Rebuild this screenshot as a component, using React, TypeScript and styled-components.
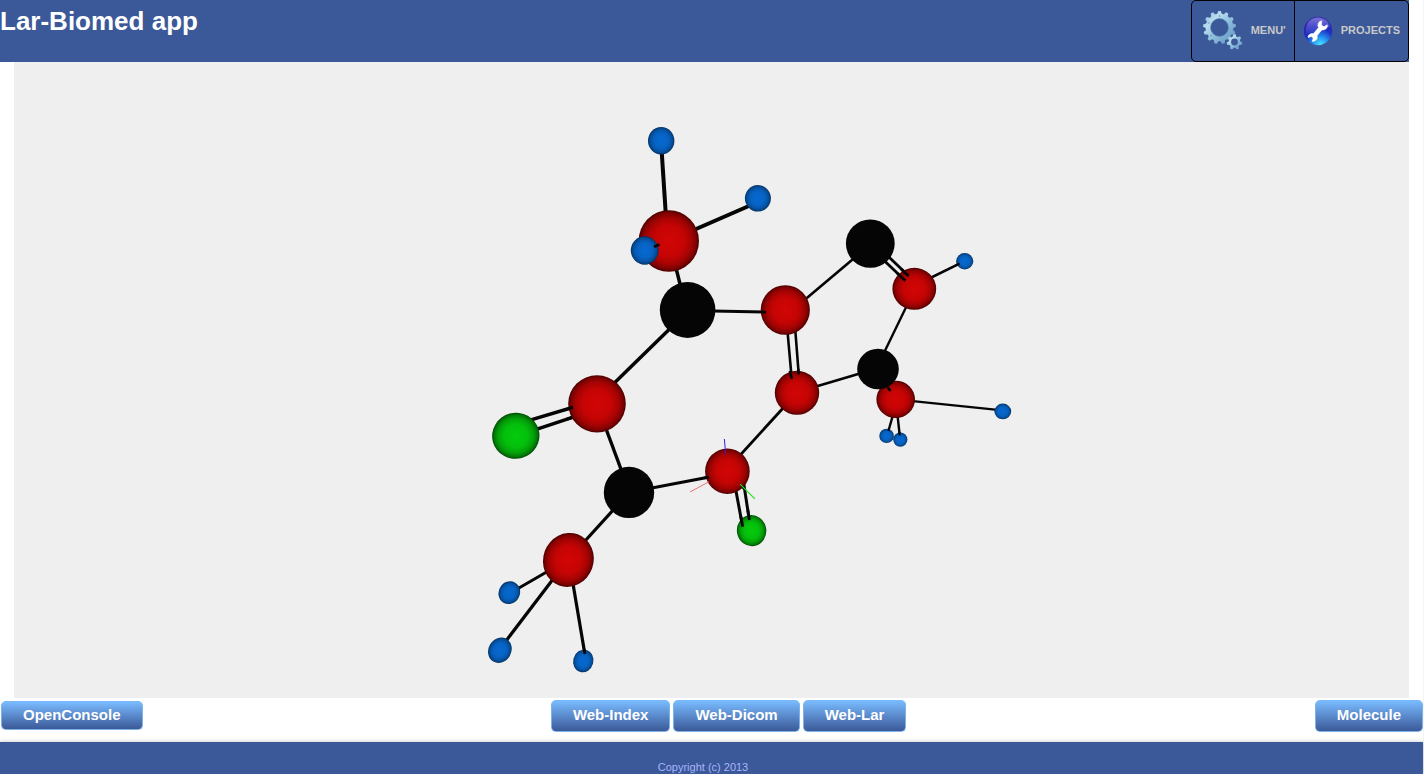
import React from "react";
import styled, { createGlobalStyle } from "styled-components";

const GlobalStyle = createGlobalStyle`
  * { box-sizing: border-box; }
  body {
    margin: 0;
    background: #fff;
    font-family: "Liberation Sans", Arial, sans-serif;
  }
`;

const Page = styled.div`
  display: flex;
  flex-direction: column;
  min-height: 100vh;
  border-right: 1px solid #f4f4f4;
`;

const Header = styled.header`
  display: flex;
  justify-content: space-between;
  height: 62px;
  margin-right: 14px;
  background: #3b5998;
`;

const Title = styled.h1`
  margin: 0;
  padding-top: 5px;
  font-size: 26px;
  line-height: 32px;
  font-weight: bold;
  color: #fff;
`;

const Menu = styled.nav`
  display: flex;
  border: 1px solid #000;
  border-radius: 5px;
`;

const MenuLink = styled.a`
  display: flex;
  align-items: center;
  gap: 8px;
  padding: 0 8px 2px;
  font-size: 11px;
  font-weight: bold;
  color: #c8c8c8;
  text-decoration: none;

  & + & {
    border-left: 1px solid #000;
  }
`;

const Stage = styled.main`
  display: flex;
  flex: 1;
  margin: 0 14px;
  background: #efefef;
`;

const Scene = styled.svg`
  display: block;
  flex: 1;
  min-width: 0;
  height: auto;
`;

const Toolbar = styled.div`
  display: flex;
  justify-content: space-between;
  align-items: flex-start;
  height: 44px;
  padding: 2px 0 0 1px;
`;

const ButtonGroup = styled.div`
  display: flex;
  gap: 3px;
`;

const Button = styled.button<{ $compact?: boolean }>`
  height: ${(p) => (p.$compact ? 29 : 32)}px;
  margin-top: ${(p) => (p.$compact ? 1 : 0)}px;
  padding: 0 21px 2px;
  border: 1px solid #7eb3e8;
  border-top-color: #7ab8fa;
  border-radius: 5px;
  background: linear-gradient(#79bbff, #3b5998);
  color: #fff;
  font-family: inherit;
  font-size: 15px;
  line-height: 18px;
  font-weight: bold;
  cursor: pointer;
`;

const Footer = styled.footer`
  height: 32px;
  padding: 18px 17px 0 0;
  background: #3b5998;
  box-shadow: 0 0 4px rgba(0, 0, 0, 0.25);
  color: #a8b4ff;
  font-size: 11px;
  line-height: 14px;
  text-align: center;
`;

function gearPath(cx: number, cy: number, outer: number, root: number, hole: number, teeth: number) {
  const step = (Math.PI * 2) / teeth;
  const at = (r: number, a: number) =>
    `${(cx + r * Math.cos(a)).toFixed(2)} ${(cy + r * Math.sin(a)).toFixed(2)}`;
  const points: string[] = [];
  for (let i = 0; i < teeth; i++) {
    const a = i * step - Math.PI / 2;
    points.push(at(root, a - step * 0.34), at(outer, a - step * 0.17), at(outer, a + step * 0.17), at(root, a + step * 0.34));
  }
  return `M${points.join("L")}ZM${cx - hole} ${cy}a${hole} ${hole} 0 1 0 ${hole * 2} 0a${hole} ${hole} 0 1 0 ${-hole * 2} 0Z`;
}

const GearsIcon = () => (
  <svg width="43" height="42" viewBox="0 0 43 42" aria-hidden="true">
    <defs>
      <linearGradient id="steel" x1="0" y1="0" x2="1" y2="1">
        <stop offset="0" stopColor="#7fb2d6" />
        <stop offset="0.3" stopColor="#b9dcee" />
        <stop offset="0.55" stopColor="#8dbfdd" />
        <stop offset="0.8" stopColor="#6fa3cb" />
        <stop offset="1" stopColor="#c3e3f5" />
      </linearGradient>
    </defs>
    <path d={gearPath(19.5, 18.5, 16.5, 13.9, 9, 13)} fill="url(#steel)" fillRule="evenodd" />
    <circle cx="19.5" cy="18.5" r="9" fill="none" stroke="#5c8fb9" strokeWidth="0.6" />
    <g fill="#5185ad">
      <circle cx="19.5" cy="7" r="0.7" />
      <circle cx="9" cy="14" r="0.7" />
      <circle cx="11" cy="26.5" r="0.7" />
    </g>
    <circle cx="34.5" cy="33" r="6.8" fill="#3b5998" />
    <path d={gearPath(34.5, 33, 7.8, 5.8, 3.4, 7)} fill="url(#steel)" fillRule="evenodd" />
  </svg>
);

const WrenchIcon = () => (
  <svg width="30" height="32" viewBox="0 -2 30 32" aria-hidden="true">
    <defs>
      <radialGradient id="orb" cx="0.58" cy="0.98" r="0.9">
        <stop offset="0" stopColor="#4be4ff" />
        <stop offset="0.3" stopColor="#2493ee" />
        <stop offset="0.6" stopColor="#2030c4" />
        <stop offset="1" stopColor="#2a22a8" />
      </radialGradient>
      <linearGradient id="gloss" x1="0" y1="0" x2="0" y2="1">
        <stop offset="0" stopColor="#a9a0f0" stopOpacity="0.65" />
        <stop offset="1" stopColor="#6c78e8" stopOpacity="0.2" />
      </linearGradient>
    </defs>
    <circle cx="15" cy="15" r="14.2" fill="url(#orb)" />
    <path d="M3 12C4 5 9 1.5 15 1.5S26 5 27 11C20 10 17 17 3 17Z" fill="url(#gloss)" />
    <path
      d="M18.8 4.8 Q16.2 5 15.2 7.4 Q14.4 9.7 15.6 11.6 L10.6 17.6 Q7.8 16.9 5.8 19 Q4.9 20.2 5.1 21.5 L8.5 20.6 L10.2 22.3 L9.2 25.4 Q12 25.6 13.6 23.6 Q14.9 21.8 14 19.8 L18.9 13.9 Q21.4 14.4 23.3 12.6 Q24.8 11 24.2 8.8 L21 10.8 L18.4 9 Z"
      fill="#fff"
      stroke="#fff"
      strokeWidth="0.6"
      strokeLinejoin="round"
    />
  </svg>
);

type Bond = [x1: number, y1: number, x2: number, y2: number, width: number];
type Atom = [kind: "red" | "blue" | "green" | "black", x: number, y: number, rx: number, ry: number, tilt?: number];

const bonds: Bond[] = [
  [661, 141, 666.5, 225, 4],
  [680, 236, 750, 205.5, 4],
  [674, 260, 684, 300, 3.5],
  [700, 310.7, 780, 312.3, 3],
  [687, 312, 600, 397, 3.5],
  [795, 308, 865, 249, 2.6],
  [786.5, 320, 791.7, 378.5, 2.6],
  [794.5, 320, 798.7, 374, 2.6],
  [876, 252.8, 905.3, 280.7, 2.8],
  [880, 248.5, 908.7, 276, 2.8],
  [914, 286, 960, 263.3, 2.6],
  [911, 297, 880, 361, 2.4],
  [800, 391.3, 870, 370.5, 2.6],
  [896, 399.3, 1000, 410.2, 2.2],
  [895, 408, 888.4, 431, 2.4],
  [896.7, 408, 899.8, 436, 2.4],
  [790, 400.5, 733, 463, 2.8],
  [520, 423.1, 580, 405.2, 3.5],
  [525, 433.2, 580, 414.9, 3.5],
  [602, 418, 625, 480, 3.4],
  [640, 490.2, 720, 475, 3.2],
  [622, 500.3, 575, 552, 3.2],
  [557, 566, 512, 592, 3],
  [560, 570, 504, 643.5, 3.2],
  [570, 566, 585.2, 656, 3.2],
  [735, 486, 742.7, 526.7, 3],
  [743.5, 482, 749.3, 520, 3],
];

const atoms: Atom[] = [
  ["blue", 661.2, 140.7, 13.2, 13.8],
  ["blue", 757.9, 198.3, 13, 13.3],
  ["red", 668.8, 241, 30.2, 30.8],
  ["blue", 644.7, 250.5, 13.9, 14.2],
  ["black", 687.6, 310, 27.8, 28],
  ["red", 785.3, 310, 24.6, 24.8],
  ["black", 870.3, 243.6, 24.4, 24.2],
  ["red", 914.3, 288.8, 21.9, 21],
  ["blue", 964.7, 261.2, 8.6, 8.2],
  ["red", 895.7, 399.4, 19.3, 18.7],
  ["black", 878, 369, 20.8, 20.2],
  ["blue", 1002.8, 411.4, 8.4, 7.8],
  ["blue", 886.6, 435.9, 7.3, 7.2],
  ["blue", 900.3, 439.6, 7.1, 7.2],
  ["red", 797, 392.8, 22.2, 22],
  ["red", 597, 403.8, 28.8, 28.6],
  ["green", 515.8, 435.8, 23.7, 23, -15],
  ["black", 629, 492.4, 25.2, 25.7],
  ["red", 727.4, 471.2, 22.3, 22.8],
  ["green", 751.6, 530.6, 14.7, 15.6, -10],
  ["red", 568.4, 559.9, 25.2, 27.2, 20],
  ["blue", 509.3, 592.7, 10.6, 11.6, 30],
  ["blue", 499.9, 650.2, 11.4, 13.1, 30],
  ["blue", 583.3, 661, 10.1, 11.4, 15],
];

// Bond ends that poke out in front of an atom.
const tips: Bond[] = [
  [654, 246.8, 659.5, 244.5, 2.6],
  [761, 312, 766, 312.2, 2.6],
  [789.7, 371, 791.9, 378.8, 2.4],
  [798.2, 369, 798.8, 374.5, 2.4],
  [897, 273, 905.5, 280.8, 2.6],
  [901, 269, 908.7, 276, 2.6],
  [887.5, 387, 890.5, 391, 2.6],
  [956, 265.2, 959.5, 263.5, 2.2],
  [568, 408.8, 573, 407.3, 3],
  [567, 419.2, 572, 417.5, 3],
  [704, 478, 709, 477, 2.8],
  [584, 649, 585, 654, 2.8],
  [740.7, 516, 742.7, 526.7, 2.8],
  [747.8, 510, 749.4, 520, 2.8],
  [741.2, 486, 744.5, 489, 2.4],
  [888.9, 429, 888.5, 431, 2],
  [899.4, 432, 899.7, 435.5, 2],
];

const shades = {
  red: ["#d20505", "#c60404", "#a60303", "#7c0202", "#4a0000"],
  blue: ["#0768cf", "#0664c6", "#0656aa", "#054486", "#04305f"],
  green: ["#04cb0c", "#04bf0b", "#03a109", "#027706", "#014a04"],
};

const shadeStops = [0, 0.5, 0.75, 0.91, 1];

const Molecule = () => (
  <Scene viewBox="14 62 1395 636" role="img" aria-label="Ball-and-stick molecule model">
    <defs>
      {Object.entries(shades).map(([name, colors]) => (
        <radialGradient id={name} key={name}>
          {colors.map((color, i) => (
            <stop key={i} offset={shadeStops[i]} stopColor={color} />
          ))}
        </radialGradient>
      ))}
    </defs>
    <g stroke="#050505">
      {bonds.map(([x1, y1, x2, y2, w], i) => (
        <line key={i} x1={x1} y1={y1} x2={x2} y2={y2} strokeWidth={w} />
      ))}
    </g>
    {atoms.map(([kind, x, y, rx, ry, tilt = 0], i) => (
      <ellipse
        key={i}
        cx={x}
        cy={y}
        rx={rx}
        ry={ry}
        fill={kind === "black" ? "#050505" : `url(#${kind})`}
        transform={`rotate(${tilt} ${x} ${y})`}
      />
    ))}
    <g stroke="#050505">
      {tips.map(([x1, y1, x2, y2, w], i) => (
        <line key={i} x1={x1} y1={y1} x2={x2} y2={y2} strokeWidth={w} />
      ))}
    </g>
    <line x1="724.4" y1="439" x2="725.7" y2="454.5" stroke="#3c1ce0" strokeWidth="1" />
    <line x1="690" y1="492" x2="709" y2="481.7" stroke="#f07070" strokeWidth="1" />
    <line x1="740.3" y1="484.3" x2="754.8" y2="498.8" stroke="#20e820" strokeWidth="1.2" />
  </Scene>
);

export default function App() {
  return (
    <>
      <GlobalStyle />
      <Page>
        <Header>
          <Title>Lar-Biomed app</Title>
          <Menu>
            <MenuLink href="#menu">
              <GearsIcon />
              MENU'
            </MenuLink>
            <MenuLink href="#projects">
              <WrenchIcon />
              PROJECTS
            </MenuLink>
          </Menu>
        </Header>
        <Stage>
          <Molecule />
        </Stage>
        <Toolbar>
          <Button type="button" $compact>OpenConsole</Button>
          <ButtonGroup>
            <Button type="button">Web-Index</Button>
            <Button type="button">Web-Dicom</Button>
            <Button type="button">Web-Lar</Button>
          </ButtonGroup>
          <Button type="button">Molecule</Button>
        </Toolbar>
        <Footer>Copyright (c) 2013</Footer>
      </Page>
    </>
  );
}
